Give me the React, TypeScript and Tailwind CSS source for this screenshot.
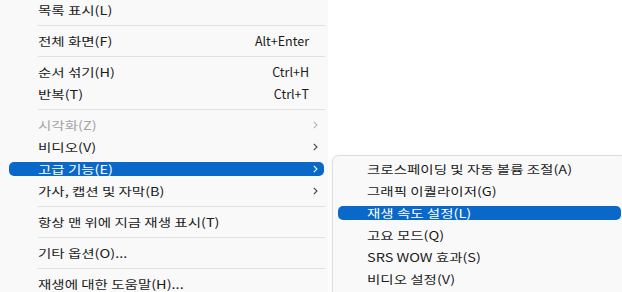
import React from 'react';

type MenuItem =
  | { sep: true }
  | {
      sep?: false;
      label: string;
      shortcut?: string;
      sub?: boolean;
      disabled?: boolean;
      active?: boolean;
    };

const mainItems: MenuItem[] = [
  { label: '목록 표시(L)' },
  { sep: true },
  { label: '전체 화면(F)', shortcut: 'Alt+Enter' },
  { sep: true },
  { label: '순서 섞기(H)', shortcut: 'Ctrl+H' },
  { label: '반복(T)', shortcut: 'Ctrl+T' },
  { sep: true },
  { label: '시각화(Z)', sub: true, disabled: true },
  { label: '비디오(V)', sub: true },
  { label: '고급 기능(E)', sub: true, active: true },
  { label: '가사, 캡션 및 자막(B)', sub: true },
  { sep: true },
  { label: '항상 맨 위에 지금 재생 표시(T)' },
  { sep: true },
  { label: '기타 옵션(O)...' },
  { sep: true },
  { label: '재생에 대한 도움말(H)...' },
];

const subItems = [
  { label: '크로스페이딩 및 자동 볼륨 조절(A)' },
  { label: '그래픽 이퀄라이저(G)' },
  { label: '재생 속도 설정(L)', active: true },
  { label: '고요 모드(Q)' },
  { label: 'SRS WOW 효과(S)' },
  { label: '비디오 설정(V)' },
];

const font = { fontFamily: '"Noto Sans CJK KR", "Noto Sans", sans-serif' };

const Chevron: React.FC<{ className?: string }> = ({ className }) => (
  <svg width="5" height="8" viewBox="0 0 5 8" className={className}>
    <path d="M0.8 0.8 L4 4 L0.8 7.2" fill="none" stroke="currentColor" strokeWidth="1.1" />
  </svg>
);

// labels in the screenshot are wide but short: bigger type, squeezed vertically
const Label: React.FC<{ text: string }> = ({ text }) => (
  <span className="inline-block whitespace-nowrap text-[14.5px] leading-[14px] scale-y-[0.82]">{text}</span>
);

const App: React.FC = () => {
  return (
    <div className="relative w-[622px] h-[292px] overflow-hidden bg-white text-[12px]" style={font}>
      {/* Main menu */}
      <div className="w-[328px] h-[300px] -mt-px bg-[#f9f9f9] flex flex-col">
        {mainItems.map((item, i) =>
          item.sep ? (
            <div key={i} className="h-[9px] flex items-center pl-[38px] pr-[3px]">
              <div className="h-px w-full bg-[#e1e1e1]" />
            </div>
          ) : (
            <div key={i} className="h-[22px] py-[4px] pl-[9px] pr-[4px]">
              <div
                className={`h-[14px] rounded-[5px] flex items-center pl-[29px] pr-[5px] leading-[14px] ${
                  item.active ? 'bg-[#0a68c8] text-white' : item.disabled ? 'text-[#a3a3a3]' : 'text-[#1b1b1b]'
                }`}
              >
                <span className="flex-1">
                  <Label text={item.label} />
                </span>
                {item.shortcut && <span className="whitespace-nowrap text-[12.5px]">{item.shortcut}</span>}
                <span className="w-[10px] flex justify-end pr-px">
                  {item.sub && (
                    <Chevron
                      className={item.active ? 'text-white' : item.disabled ? 'text-[#b5b5b5]' : 'text-[#444444]'}
                    />
                  )}
                </span>
              </div>
            </div>
          )
        )}
      </div>

      {/* Submenu flyout */}
      <div className="absolute left-[332px] top-[155px] w-[296px] h-[150px] bg-[#f9f9f9] border border-[#dedede] rounded-[7px] pt-[2px] shadow-[0_2px_6px_rgba(0,0,0,0.06)]">
        {subItems.map((item, i) => (
          <div key={i} className="h-[22px] py-[4px] pl-[5px] pr-[6px]">
            <div
              className={`h-[14px] rounded-[5px] flex items-center pl-[29px] ${
                item.active ? 'bg-[#0a68c8] text-white' : 'text-[#1b1b1b]'
              }`}
            >
              <Label text={item.label} />
            </div>
          </div>
        ))}
      </div>
    </div>
  );
};

export default App;
